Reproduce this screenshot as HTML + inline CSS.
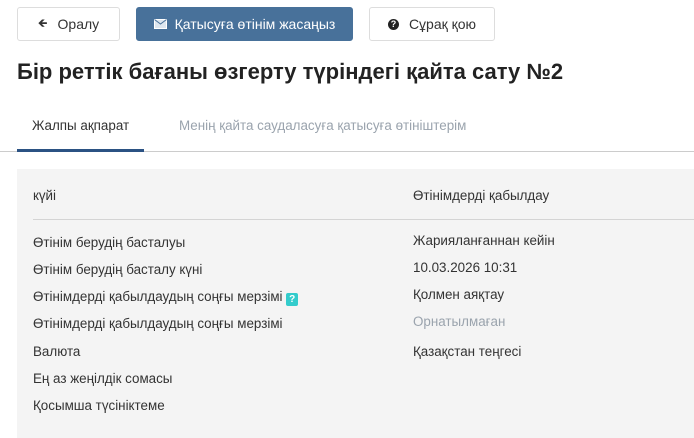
<!DOCTYPE html>
<html><head><meta charset="utf-8"><style>
body{margin:0;width:694px;height:438px;overflow:hidden;background:#fff;font-family:"Liberation Sans","DejaVu Sans",sans-serif;color:#222;position:relative}
.a{position:absolute;white-space:nowrap}
.btn{position:absolute;top:7px;height:34px;border:1px solid #ddd;border-radius:3px;background:#fff;font-size:14px;display:flex;align-items:center;justify-content:center;box-sizing:border-box;color:#333}
.r{font-size:13.4px;color:#333}
</style></head><body>
<div class="btn" style="left:17px;width:103px"><span style="font-size:12px;margin-right:10px">&#129144;</span>Оралу</div>
<div class="btn" style="left:136px;width:217px;background:#48719a;border-color:#48719a;color:#fff"><svg width="13" height="10" style="margin-right:8px"><rect x="0.5" y="0.5" width="12" height="9" fill="#dde6ef" stroke="#fff"/><path d="M0.5 0.5 L6.5 5 L12.5 0.5" stroke="#48719a" fill="none"/></svg>Қатысуға өтінім жасаңыз</div>
<div class="btn" style="left:369px;width:126px"><span style="display:inline-block;width:11px;height:11px;border-radius:50%;background:#222;color:#fff;font-size:9px;font-weight:bold;text-align:center;line-height:11px;margin-right:10px">?</span>Сұрақ қою</div>
<div class="a" style="left:17px;top:59px;font-size:22px;font-weight:bold;color:#222">Бір реттік бағаны өзгерту түріндегі қайта сату №2</div>
<div class="a" style="left:32px;top:118px;font-size:13.4px;color:#333">Жалпы ақпарат</div>
<div class="a" style="left:179px;top:118px;font-size:13.4px;color:#9aa3ad">Менің қайта саудаласуға қатысуға өтініштерім</div>
<div class="a" style="left:0;top:151px;width:694px;height:1px;background:#ccc"></div>
<div class="a" style="left:17px;top:149px;width:127px;height:3px;background:#2b5283"></div>
<div class="a" style="left:17px;top:169px;width:677px;height:269px;background:#f4f4f4"></div>
<div class="a" style="left:33px;top:219px;width:661px;height:1px;background:#d4d4d4"></div>
<div class="a r" style="left:33px;top:188px">күйі</div>
<div class="a r" style="left:413px;top:188px">Өтінімдерді қабылдау</div>
<div class="a r" style="left:33px;top:235px">Өтінім берудің басталуы</div>
<div class="a r" style="left:413px;top:233px">Жарияланғаннан кейін</div>
<div class="a r" style="left:33px;top:262px">Өтінім берудің басталу күні</div>
<div class="a r" style="left:413px;top:260px">10.03.2026 10:31</div>
<div class="a r" style="left:33px;top:289px">Өтінімдерді қабылдаудың соңғы мерзімі <span style="display:inline-block;width:12px;height:13px;background:#3cc;color:#fff;font-size:10px;font-weight:bold;text-align:center;line-height:13px;border-radius:2px;vertical-align:-1px">?</span></div>
<div class="a r" style="left:413px;top:287px">Қолмен аяқтау</div>
<div class="a r" style="left:33px;top:316px">Өтінімдерді қабылдаудың соңғы мерзімі</div>
<div class="a r" style="left:413px;top:314px;color:#9aa3ad">Орнатылмаған</div>
<div class="a r" style="left:33px;top:344px">Валюта</div>
<div class="a r" style="left:413px;top:344px">Қазақстан теңгесі</div>
<div class="a r" style="left:33px;top:371px">Ең аз жеңілдік сомасы</div>
<div class="a r" style="left:33px;top:398px">Қосымша түсініктеме</div>
</body></html>
